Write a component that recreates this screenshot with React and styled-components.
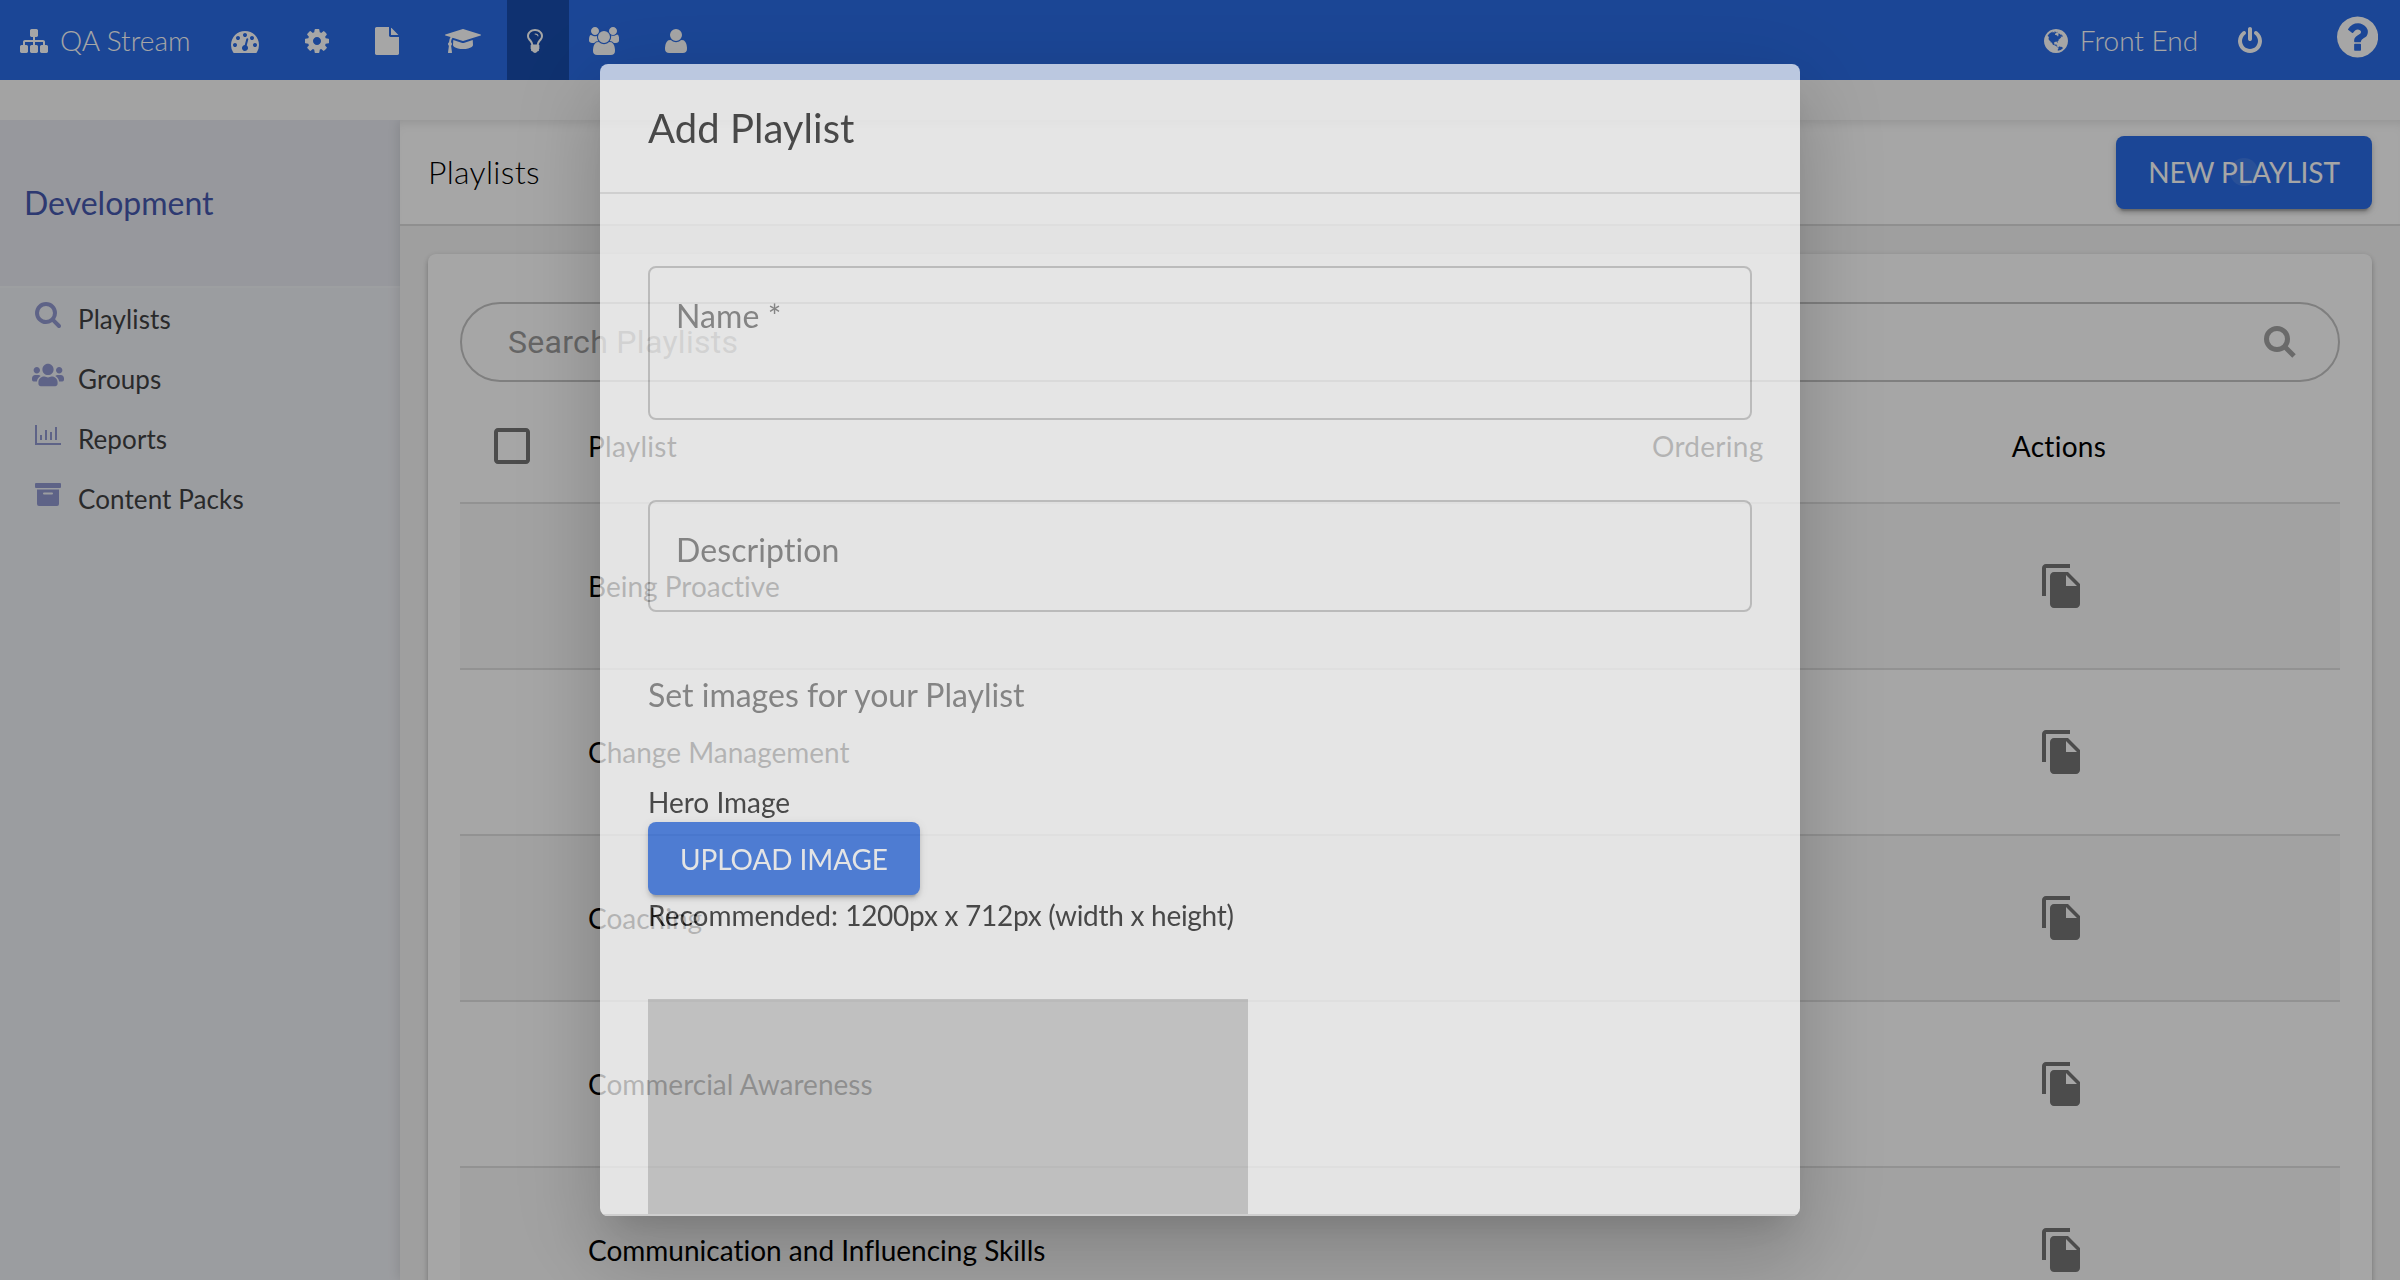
import React from "react";
import styled, { createGlobalStyle } from "styled-components";
import { FaUsers } from "react-icons/fa";
import { MdFileCopy, MdCheckBoxOutlineBlank } from "react-icons/md";

const GlobalStyle = createGlobalStyle`
  *, *::before, *::after { box-sizing: border-box; }
  html, body { margin: 0; padding: 0; overflow: hidden; }
  body {
    font-family: Lato, "Liberation Sans", sans-serif;
    font-size: 28px;
    color: #000;
    font-variant-ligatures: none;
  }
`;

const GLYPHS = {
  sitemap: ["0 0 1792 1792", "M1792 1248v320q0 40-28 68t-68 28h-320q-40 0-68-28t-28-68v-320q0-40 28-68t68-28h96v-192h-512v192h96q40 0 68 28t28 68v320q0 40-28 68t-68 28h-320q-40 0-68-28t-28-68v-320q0-40 28-68t68-28h96v-192h-512v192h96q40 0 68 28t28 68v320q0 40-28 68t-68 28h-320q-40 0-68-28t-28-68v-320q0-40 28-68t68-28h96v-192q0-52 38-90t90-38h512v-192h-96q-40 0-68-28t-28-68v-320q0-40 28-68t68-28h320q40 0 68 28t28 68v320q0 40-28 68t-68 28h-96v192h512q52 0 90 38t38 90v192h96q40 0 68 28t28 68z"],
  dashboard: ["0 0 1792 1792", "M384 1152q0-53-37.5-90.5t-90.5-37.5-90.5 37.5-37.5 90.5 37.5 90.5 90.5 37.5 90.5-37.5 37.5-90.5zm192-448q0-53-37.5-90.5t-90.5-37.5-90.5 37.5-37.5 90.5 37.5 90.5 90.5 37.5 90.5-37.5 37.5-90.5zm428 481l101-382q6-26-7.5-48.5t-38.5-29.5-48 6.5-30 39.5l-101 382q-60 5-107 43.5t-63 98.5q-20 77 20 146t117 89 146-20 89-117q16-60-6-117t-72-91zm660-33q0-53-37.5-90.5t-90.5-37.5-90.5 37.5-37.5 90.5 37.5 90.5 90.5 37.5 90.5-37.5 37.5-90.5zm-640-640q0-53-37.5-90.5t-90.5-37.5-90.5 37.5-37.5 90.5 37.5 90.5 90.5 37.5 90.5-37.5 37.5-90.5zm448 192q0-53-37.5-90.5t-90.5-37.5-90.5 37.5-37.5 90.5 37.5 90.5 90.5 37.5 90.5-37.5 37.5-90.5zm320 448q0 261-141 483-19 29-54 29h-1402q-35 0-54-29-141-221-141-483 0-182 71-348t191-286 286-191 348-71 348 71 286 191 191 286 71 348z"],
  cog: ["128 0 1536 1792", "M1152 896q0-106-75-181t-181-75-181 75-75 181 75 181 181 75 181-75 75-181zm512-109v222q0 12-8 23t-20 13l-185 28q-19 54-39 91 35 50 107 138 10 12 10 25t-9 23q-27 37-99 108t-94 71q-12 0-26-9l-138-108q-44 23-91 38-16 136-29 186-7 28-36 28h-222q-14 0-24.5-8.5t-11.5-21.5l-28-184q-49-16-90-37l-141 107q-10 9-25 9-14 0-25-11-126-114-165-168-7-10-7-23 0-12 8-23 15-21 51-66.5t54-70.5q-27-50-41-99l-183-27q-13-2-21-12.5t-8-23.5v-222q0-12 8-23t19-13l186-28q14-46 39-92-40-57-107-138-10-12-10-24 0-10 9-23 26-36 98.5-107.5t94.5-71.5q13 0 26 10l138 107q44-23 91-38 16-136 29-186 7-28 36-28h222q14 0 24.5 8.5t11.5 21.5l28 184q49 16 90 37l142-107q9-9 24-9 13 0 25 10 129 119 165 170 7 8 7 22 0 12-8 23-15 21-51 66.5t-54 70.5q26 50 41 98l183 28q13 2 21 12.5t8 23.5z"],
  file: ["128 0 1536 1792", "M1152 512v-472q22 14 36 28l408 408q14 14 28 36h-472zm-128 32q0 40 28 68t68 28h544v1056q0 40-28 68t-68 28h-1344q-40 0-68-28t-28-68v-1600q0-40 28-68t68-28h800v544z"],
  cap: ["0 0 2304 1792", "M1774 836l18 316q4 69-82 128t-235 93.5-323 34.5-323-34.5-235-93.5-82-128l18-316 574 181q22 7 48 7t48-7zm530-324q0 23-22 31l-1120 352q-4 1-10 1t-10-1l-652-206q-43 34-71 111.5t-34 178.5q63 36 63 109 0 69-58 107l58 433q2 14-8 25-9 11-24 11h-192q-15 0-24-11-10-11-8-25l58-433q-58-38-58-107 0-73 65-111 11-207 98-330l-333-104q-22-8-22-31t22-31l1120-352q4-1 10-1t10 1l1120 352q22 8 22 31z"],
  bulb: ["384 0 1024 1792", "M1120 576q0 13-9.5 22.5t-22.5 9.5-22.5-9.5-9.5-22.5q0-46-54-71t-106-25q-13 0-22.5-9.5t-9.5-22.5 9.5-22.5 22.5-9.5q50 0 99.5 16t87 54 37.5 90zm160 0q0-72-34.5-134t-90-101.5-123-62-136.5-22.5-136.5 22.5-123 62-90 101.5-34.5 134q0 101 68 180 10 11 30.5 33t30.5 33q128 153 141 298h228q13-145 141-298 10-11 30.5-33t30.5-33q68-79 68-180zm128 0q0 155-103 268-45 49-74.5 87t-59.5 95.5-34 107.5q47 28 47 82 0 37-25 64 25 27 25 64 0 52-45 81 13 23 13 47 0 46-31.5 71t-77.5 25q-20 44-60 70t-87 26-87-26-60-70q-46 0-77.5-25t-31.5-71q0-24 13-47-45-29-45-81 0-37 25-64-25-27-25-64 0-54 47-82-4-50-34-107.5t-59.5-95.5-74.5-87q-103-113-103-268 0-99 44.5-184.5t117-142 164-89 186.5-32.5 186.5 32.5 164 89 117 142 44.5 184.5z"],
  users: ["0 0 1920 1792", "M593 896q-162 5-265 128h-134q-82 0-138-40.5t-56-118.5q0-353 124-353 6 0 43.5 21t97.5 42.5 119 21.5q67 0 133-23-5 37-5 66 0 159 93 287zm1071 637q0 120-73 189.5t-194 69.5h-874q-121 0-194-69.5t-73-189.5q0-53 3.5-103.5t14-109 26.5-108.5 43-97.5 62-81 85.5-53.5 111.5-20q10 0 43 21.5t73 48 107 48 135 21.5 135-21.5 107-48 73-48 43-21.5q61 0 111.5 20t85.5 53.5 62 81 43 97.5 26.5 108.5 14 109 3.5 103.5zm-1024-1277q0 106-75 181t-181 75-181-75-75-181 75-181 181-75 181 75 75 181zm704 384q0 159-112.5 271.5t-271.5 112.5-271.5-112.5-112.5-271.5 112.5-271.5 271.5-112.5 271.5 112.5 112.5 271.5zm576 225q0 78-56 118.5t-138 40.5h-134q-103-123-265-128 93-128 93-287 0-29-5-66 66 23 133 23 59 0 119-21.5t97.5-42.5 43.5-21q124 0 124 353zm-128-609q0 106-75 181t-181 75-181-75-75-181 75-181 181-75 181 75 75 181z"],
  user: ["0 0 1408 1792", "M1408 1405q0 120-73 189.5t-194 69.5h-874q-121 0-194-69.5t-73-189.5q0-53 3.5-103.5t14-109 26.5-108.5 43-97.5 62-81 85.5-53.5 111.5-20q10 0 43 21.5t73 48 107 48 135 21.5 135-21.5 107-48 73-48 43-21.5q61 0 111.5 20t85.5 53.5 62 81 43 97.5 26.5 108.5 14 109 3.5 103.5zm-320-893q0 159-112.5 271.5t-271.5 112.5-271.5-112.5-112.5-271.5 112.5-271.5 271.5-112.5 271.5 112.5 112.5 271.5z"],
  globe: ["128 0 1536 1792", "M896 128q209 0 385.5 103t279.5 279.5 103 385.5-103 385.5-279.5 279.5-385.5 103-385.5-103-279.5-279.5-103-385.5 103-385.5 279.5-279.5 385.5-103zm274 521q-2 1-9.5 9.5t-13.5 9.5q2 0 4.5-5t5-11 3.5-7q6-7 22-15 14-6 52-12 34-8 51 11-2-2 9.5-13t14.5-12q3-2 15-4.5t15-7.5l2-22q-12 1-17.5-7t-6.5-21q0 2-6 8 0-7-4.5-8t-11.5 1-9 1q-10-3-15-7.5t-8-16.5-4-15q-2-5-9.5-11t-9.5-10q-1-2-2.5-5.5t-3-6.5-4-5.5-5.5-2.5-7 5-7.5 10-4.5 5q-3-2-6-1.5t-4.5 1-4.5 3-5 3.5q-3 2-8.5 3t-8.5 2q15-5-1-11-10-4-16-3 9-4 7.5-12t-8.5-14h5q-1-4-8.5-8.5t-17.5-8.5-13-6q-8-5-34-9.5t-33-.5q-5 6-4.5 10.5t4 14 3.5 12.5q1 6-5.5 13t-6.5 12q0 7 14 15.5t10 21.5q-3 8-16 16t-16 12q-5 8-1.5 18.5t10.5 16.5q2 2 1.5 4t-3.5 4.5-5.5 4-6.5 3.5l-3 2q-11 5-20.5-6t-13.5-26q-7-25-16-30-23-8-29 1-5-13-41-26-25-9-58-4 6-1 0-15-7-15-19-12 3-6 4-17.5t1-13.5q3-13 12-23 1-1 7-8.5t9.5-13.5.5-6q35 4 50-11 5-5 11.5-17t10.5-17q9-6 14-5.5t14.5 5.5 14.5 5q14 1 15.5-11t-7.5-20q12 1 3-17-4-7-8-9-12-4-27 5-8 4 2 8-1-1-9.5 10.5t-16.5 17.5-16-5q-1-1-5.5-13.5t-9.5-13.5q-8 0-16 15 3-8-11-15t-24-8q19-12-8-27-7-4-20.5-5t-19.5 4q-5 7-5.5 11.5t5 8 10.5 5.5 11.5 4 8.5 3q14 10 8 14-2 1-8.5 3.5t-11.5 4.5-6 4q-3 4 0 14t-2 14q-5-5-9-17.5t-7-16.5q7 9-25 6l-10-1q-4 0-16 2t-20.5 1-13.5-8q-4-8 0-20 1-4 4-2-4-3-11-9.5t-10-8.5q-46 15-94 41 6 1 12-1 5-2 13-6.5t10-5.5q34-14 42-7l5-5q14 16 20 25-7-4-30-1-20 6-22 12 7 12 5 18-4-3-11.5-10t-14.5-11-15-5q-16 0-22 1-146 80-235 222 7 7 12 8 4 1 5 9t2.5 11 11.5-3q9 8 3 19 1-1 44 27 19 17 21 21 3 11-10 18-1-2-9-9t-9-4q-3 5 .5 18.5t10.5 12.5q-7 0-9.5 16t-2.5 35.5-1 23.5l2 1q-3 12 5.5 34.5t21.5 19.5q-13 3 20 43 6 8 8 9 3 2 12 7.5t15 10 10 10.5q4 5 10 22.5t14 23.5q-2 6 9.5 20t10.5 23q-1 0-2.5 1t-2.5 1q3 7 15.5 14t15.5 13q1 3 2 10t3 11 8 2q2-20-24-62-15-25-17-29-3-5-5.5-15.5t-4.5-14.5q2 0 6 1.5t8.5 3.5 7.5 4 2 3q-3 7 2 17.5t12 18.5 17 19 12 13q6 6 14 19.5t0 13.5q9 0 20 10.5t17 19.5q5 8 8 26t5 24q2 7 8.5 13.5t12.5 9.5l16 8 13 7q5 2 18.5 10.5t21.5 11.5q10 4 16 4t14.5-2.5 13.5-3.5q15-2 29 15t21 21q36 19 55 11-2 1 .5 7.5t8 15.5 9 14.5 5.5 8.5q5 6 18 15t18 15q6-4 7-9-3 8 7 20t18 10q14-3 14-32-31 15-49-18 0-1-2.5-5.5t-4-8.5-2.5-8.5 0-7.5 5-3q9 0 10-3.5t-2-12.5-4-13q-1-8-11-20t-12-15q-5 9-16 8t-16-9q0 1-1.5 5.5t-1.5 6.5q-13 0-15-1 1-3 2.5-17.5t3.5-22.5q1-4 5.5-12t7.5-14.5 4-12.5-4.5-9.5-17.5-2.5q-19 1-26 20-1 3-3 10.5t-5 11.5-9 7q-7 3-24 2t-24-5q-13-8-22.5-29t-9.5-37q0-10 2.5-26.5t3-25-5.5-24.5q3-2 9-9.5t10-10.5q2-1 4.5-1.5t4.5 0 4-1.5 3-6q-1-1-4-3-3-3-4-3 7 3 28.5-1.5t27.5 1.5q15 11 22-2 0-1-2.5-9.5t-.5-13.5q5 27 29 9 3 3 15.5 5t17.5 5q3 2 7 5.5t5.5 4.5 5-.5 8.5-6.5q10 14 12 24 11 40 19 44 7 3 11 2t4.5-9.5 0-14-1.5-12.5l-1-8v-18l-1-8q-15-3-18.5-12t1.5-18.5 15-18.5q1-1 8-3.5t15.5-6.5 12.5-8q21-19 15-35 7 0 11-9-1 0-5-3t-7.5-5-4.5-2q9-5 2-16 5-3 7.5-11t7.5-10q9 12 21 2 8-8 1-16 5-7 20.5-10.5t18.5-9.5q7 2 8-2t1-12 3-12q4-5 15-9t13-5l17-11q3-4 0-4 18 2 31-11 10-11-6-20 3-6-3-9.5t-15-5.5q3-1 11.5-.5t10.5-1.5q15-10-7-16-17-5-43 12zm-163 877q206-36 351-189-3-3-12.5-4.5t-12.5-3.5q-18-7-24-8 1-7-2.5-13t-8-9-12.5-8-11-7q-2-2-7-6t-7-5.5-7.5-4.5-8.5-2-10 1l-3 1q-3 1-5.5 2.5t-5.5 3-4 3 0 2.5q-21-17-36-22-5-1-11-5.5t-10.5-7-10-1.5-11.5 7q-5 5-6 15t-2 13q-7-5 0-17.5t2-18.5q-3-6-10.5-4.5t-12 4.5-11.5 8.5-9 6.5-8.5 5.5-8.5 7.5q-3 4-6 12t-5 11q-2-4-11.5-6.5t-9.5-5.5q2 10 4 35t5 38q7 31-12 48-27 25-29 40-4 22 12 26 0 7-8 20.5t-7 21.5q0 6 2 16z"],
  power: ["128 0 1536 1792", "M1664 896q0 156-61 298t-164 245-245 164-298 61-298-61-245-164-164-245-61-298q0-182 80.5-343t226.5-270q43-32 95.5-25t83.5 50q32 42 24.5 94.5t-49.5 84.5q-98 74-151.5 181t-53.5 228q0 104 40.5 198.5t109.5 163.5 163.5 109.5 198.5 40.5 198.5-40.5 163.5-109.5 109.5-163.5 40.5-198.5q0-121-53.5-228t-151.5-181q-42-32-49.5-84.5t24.5-94.5q31-43 84-50t95 25q146 109 226.5 270t80.5 343zm-640-768v640q0 52-38 90t-90 38-90-38-38-90v-640q0-52 38-90t90-38 90 38 38 90z"],
  help: ["128 0 1536 1792", "M1024 1376v-192q0-14-9-23t-23-9h-192q-14 0-23 9t-9 23v192q0 14 9 23t23 9h192q14 0 23-9t9-23zm256-672q0-88-55.5-163t-138.5-116-170-41q-243 0-371 213-15 24 8 42l132 100q7 6 19 6 16 0 25-12 53-68 86-92 34-24 86-24 48 0 85.5 26t37.5 59q0 38-20 61t-68 45q-63 28-115.5 86.5t-52.5 125.5v36q0 14 9 23t23 9h192q14 0 23-9t9-23q0-19 21.5-49.5t54.5-49.5q32-18 49-28.5t46-35 44.5-48 28-60.5 12.5-81zm384 192q0 209-103 385.5t-279.5 279.5-385.5 103-385.5-103-279.5-279.5-103-385.5 103-385.5 279.5-279.5 385.5-103 385.5 103 279.5 279.5 103 385.5z"],
  search: ["64 128 1664 1664", "M1216 832q0-185-131.5-316.5t-316.5-131.5-316.5 131.5-131.5 316.5 131.5 316.5 316.5 131.5 316.5-131.5 131.5-316.5zm512 832q0 52-38 90t-90 38q-54 0-90-38l-343-342q-179 124-399 124-143 0-273.5-55.5t-225-150-150-225-55.5-273.5 55.5-273.5 150-225 225-150 273.5-55.5 273.5 55.5 225 150 150 225 55.5 273.5q0 220-124 399l343 343q37 37 37 90z"],
};

const Glyph = styled.svg`
  display: block;
  flex: none;
  height: ${(p) => p.$h || 28}px;
  fill: currentColor;
`;
function Icon({ name, size }) {
  const [viewBox, d] = GLYPHS[name];
  return (
    <Glyph viewBox={viewBox} $h={size}>
      <path d={d} />
    </Glyph>
  );
}

const Page = styled.div`
  width: 2400px;
  height: 1280px;
  display: flex;
  flex-direction: column;
  overflow: hidden;
  background: #fafafa;
`;
const NavBar = styled.nav`
  height: 80px;
  flex: none;
  display: flex;
  background: #2a6ce6;
  color: #fff;
  font-weight: 300;
  font-size: 28px;
`;
const NavItem = styled.a`
  display: flex;
  align-items: center;
  gap: 12px;
  padding: 2px 26px 0 20px;
  white-space: nowrap;
  width: ${(p) => (p.$w ? p.$w + "px" : "auto")};
  background: ${(p) => (p.$active ? "#174cac" : "transparent")};
`;
const NavText = styled.span`
  margin-bottom: 3px;
`;
const Spacer = styled.div`
  flex: 1;
`;
const HelpItem = styled(NavItem)`
  padding: 0 22px 7px 49px;
`;

const Body = styled.div`
  flex: 1;
  display: flex;
  margin-top: 40px;
  min-height: 0;
  overflow: hidden;
`;
const Sidebar = styled.aside`
  width: 400px;
  flex: none;
  background: #eff1f6;
`;
const SidebarHead = styled.div`
  height: 168px;
  display: flex;
  align-items: center;
  padding: 0 24px 2px;
  background: #e8eaf1;
  color: #4658ae;
  font-size: 32px;
  border-bottom: 2px solid #f2f4f8;
`;
const Menu = styled.ul`
  list-style: none;
  margin: 0;
  padding: 0;
`;
const MenuItem = styled.li`
  height: 60px;
  display: flex;
  align-items: center;
  padding: 1px 0 0 30px;
  color: #3f4143;
  font-size: 26px;
  letter-spacing: 0.1px;
`;
const MenuIcon = styled.span`
  width: 36px;
  height: 32px;
  margin: 0 12px 7px 0;
  display: flex;
  align-items: center;
  justify-content: center;
  color: #9199d0;
`;

const Main = styled.main`
  flex: 1;
  display: flex;
  flex-direction: column;
  background: #f5f5f5;
  box-shadow: 0 0 12px rgba(0, 0, 0, 0.14);
`;
const TopBar = styled.header`
  height: 106px;
  flex: none;
  display: flex;
  align-items: center;
  justify-content: space-between;
  padding: 0 28px;
  background: #fff;
  border-bottom: 2px solid #dcdcdc;
  box-shadow: inset 0 10px 12px -8px rgba(0, 0, 0, 0.12);
`;
const Heading = styled.h1`
  margin: 0 0 2px;
  font-size: 32px;
  font-weight: 300;
  letter-spacing: 0.01em;
`;
const Button = styled.button`
  position: relative;
  display: flex;
  align-items: center;
  justify-content: center;
  width: ${(p) => p.$w}px;
  height: 73px;
  border: 0;
  border-radius: 8px;
  padding: 0;
  background: #2a6ce6;
  color: #fff;
  font: 400 28px Lato, "Liberation Sans", sans-serif;
  letter-spacing: -0.1px;
  box-shadow: 0 6px 2px -4px rgba(0, 0, 0, 0.2), 0 4px 4px 0 rgba(0, 0, 0, 0.14), 0 2px 10px 0 rgba(0, 0, 0, 0.12);
`;
const Ripple = styled.span`
  position: absolute;
  left: 114px;
  top: 22px;
  width: 28px;
  height: 28px;
  border-radius: 50%;
  background: rgba(255, 255, 255, 0.1);
`;
const Card = styled.section`
  flex: 1;
  margin: 28px 28px 0;
  padding: 48px 32px 0;
  background: #fff;
  border-radius: 8px 8px 0 0;
  box-shadow: 0 2px 6px rgba(0, 0, 0, 0.2), 0 4px 4px rgba(0, 0, 0, 0.1);
`;
const SearchBox = styled.div`
  height: 80px;
  display: flex;
  align-items: center;
  justify-content: space-between;
  padding: 0 42px 0 46px;
  border: 2px solid #c4c4c4;
  border-radius: 40px;
  color: #9c9c9c;
  font: 400 32px Roboto, sans-serif;
  letter-spacing: 0.00938em;
`;
const Row = styled.div`
  display: grid;
  grid-template-columns: 128px 1064px 132px 1fr;
  align-items: center;
  height: 166px;
  border-bottom: 2px solid #e0e0e0;
  background: ${(p) => (p.$shaded ? "#f9f9f9" : "transparent")};
  svg { width: 48px; height: 48px; color: #757575; display: block; }
`;
const HeadRow = styled(Row)`
  height: 114px;
  margin-top: 8px;
  letter-spacing: 0.01em;
`;
const CheckCell = styled.div`
  padding-left: 28px;
`;
const ActionCell = styled.div`
  display: flex;
  justify-content: center;
  padding-right: ${(p) => (p.$head ? 6 : 0)}px;
`;

const Backdrop = styled.div`
  position: fixed;
  inset: 0;
  background: rgba(0, 0, 0, 0.35);
  z-index: 10;
`;
const DialogLayer = styled.div`
  position: fixed;
  inset: 0;
  z-index: 11;
  display: flex;
  align-items: center;
  justify-content: center;
  opacity: 0.7;
`;
const Dialog = styled.div`
  width: 1200px;
  height: 1152px;
  display: flex;
  flex-direction: column;
  background: #fff;
  color: #212121;
  border-radius: 8px;
  overflow: hidden;
  box-shadow: 0 22px 30px -14px rgba(0, 0, 0, 0.2), 0 48px 76px 6px rgba(0, 0, 0, 0.14), 0 18px 92px 16px rgba(0, 0, 0, 0.12);
`;
const DialogTitle = styled.h2`
  margin: 0;
  padding: 32px 48px;
  font-size: 40px;
  font-weight: 400;
  line-height: 64px;
  letter-spacing: 0.0015em;
`;
const DialogContent = styled.div`
  flex: 1;
  min-height: 0;
  overflow: hidden;
  padding: 72px 48px 0;
  border-top: 2px solid #e0e0e0;
  border-bottom: 2px solid #e0e0e0;
`;
const Field = styled.div`
  height: ${(p) => p.$h}px;
  margin-bottom: ${(p) => p.$gap}px;
  padding: 28px 26px;
  border: 2px solid #c4c4c4;
  border-radius: 8px;
  color: #757575;
  font-size: 32px;
  line-height: 40px;
  letter-spacing: 0.1px;
`;
const SectionLabel = styled.p`
  margin: 0 0 67px;
  color: #757575;
  font-size: 32px;
  line-height: 40px;
`;
const Text = styled.p`
  margin: 0;
  font-size: 28px;
  line-height: 40px;
`;
const Dimensions = styled.span`
  letter-spacing: -0.28px;
`;
const Preview = styled.div`
  width: 600px;
  height: 400px;
  margin-top: 64px;
  background: #cbcbcb;
`;

const ChartIcon = () => (
  <svg width="26" height="20" viewBox="0 0 26 20" fill="currentColor">
    <path d="M0 0h2v18h24v2H0zM5 10h2v5H5zM10 5h2v10h-2zM15 7h2v8h-2zM20 2h2v13h-2z" />
  </svg>
);
const ArchiveIcon = () => (
  <svg width="26" height="24" viewBox="0 0 26 24" fill="currentColor">
    <path fillRule="evenodd" d="M1 0h24q1 0 1 1v3q0 1-1 1H1Q0 5 0 4V1Q0 0 1 0zM2 6.500h22V21q0 2-2 2H4q-2 0-2-2zM9 9.500q-1 0-1 1t1 1h8q1 0 1-1t-1-1z" />
  </svg>
);

const FieldSearch = styled.svg`
  width: 32px;
  height: 32px;
  fill: none;
  stroke: #a3a3a3;
  stroke-width: 5;
`;

const navItems = ["dashboard", "cog", "file", "cap", "bulb", "users", "user"];
const rows = ["Being Proactive", "Change Management", "Coaching", "Commercial Awareness", "Communication and Influencing Skills"];
const menu = [
  ["Playlists", <Icon name="search" size={26} />],
  ["Groups", <FaUsers size={32} />],
  ["Reports", <ChartIcon />],
  ["Content Packs", <ArchiveIcon />],
];

export default function App() {
  return (
    <>
      <GlobalStyle />
      <Page>
        <NavBar>
          <NavItem $w={211}><Icon name="sitemap" /><NavText>QA Stream</NavText></NavItem>
          {navItems.map((n) => (
            <NavItem key={n} $active={n === "bulb"}><Icon name={n} /></NavItem>
          ))}
          <Spacer />
          <NavItem $w={194}><Icon name="globe" /><NavText>Front End</NavText></NavItem>
          <NavItem><Icon name="power" /></NavItem>
          <HelpItem><Icon name="help" size={48} /></HelpItem>
        </NavBar>
        <Body>
          <Sidebar>
            <SidebarHead>Development</SidebarHead>
            <Menu>
              {menu.map(([label, icon]) => (
                <MenuItem key={label}><MenuIcon>{icon}</MenuIcon>{label}</MenuItem>
              ))}
            </Menu>
          </Sidebar>
          <Main>
            <TopBar>
              <Heading>Playlists</Heading>
              <Button $w={256}>NEW PLAYLIST<Ripple /></Button>
            </TopBar>
            <Card>
              <SearchBox>
                Search Playlists
                <FieldSearch viewBox="0 0 32 32">
                  <circle cx="13" cy="13" r="10.5" />
                  <path d="M20.500 20.500L30 30" />
                </FieldSearch>
              </SearchBox>
              <HeadRow>
                <CheckCell><MdCheckBoxOutlineBlank /></CheckCell>
                <span>Playlist</span>
                <span>Ordering</span>
                <ActionCell $head>Actions</ActionCell>
              </HeadRow>
              {rows.map((name, i) => (
                <Row key={name} $shaded={i % 2 === 0}>
                  <span />
                  <span>{name}</span>
                  <span />
                  <ActionCell><MdFileCopy /></ActionCell>
                </Row>
              ))}
            </Card>
          </Main>
        </Body>
      </Page>
      <Backdrop />
      <DialogLayer>
        <Dialog>
          <DialogTitle>Add Playlist</DialogTitle>
          <DialogContent>
            <Field $h={154} $gap={80}>Name *</Field>
            <Field $h={112} $gap={63}>Description</Field>
            <SectionLabel>Set images for your Playlist</SectionLabel>
            <Text>Hero Image</Text>
            <Button $w={272}>UPLOAD IMAGE</Button>
            <Text>Recommended: <Dimensions>1200px x 712px (width x height)</Dimensions></Text>
            <Preview />
          </DialogContent>
        </Dialog>
      </DialogLayer>
    </>
  );
}
